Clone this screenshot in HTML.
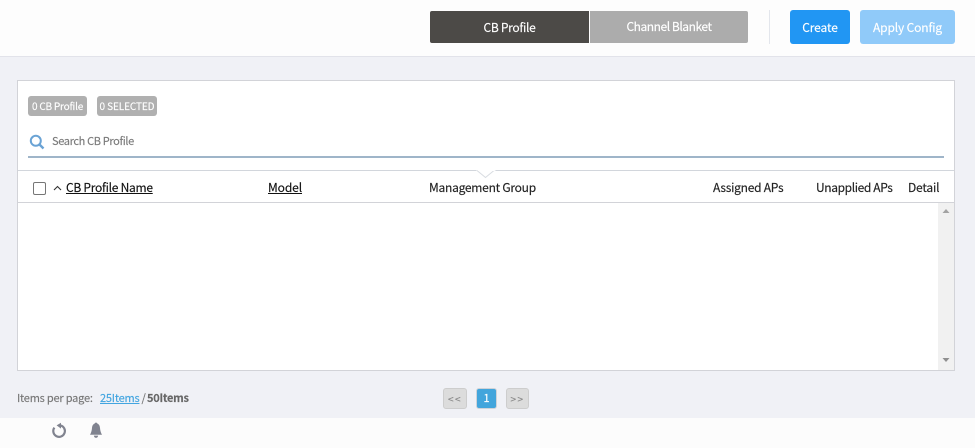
<!DOCTYPE html>
<html><head><meta charset="utf-8"><style>
html,body{margin:0;padding:0}
body{width:975px;height:448px;overflow:hidden;position:relative;background:#f0f1f6;font-family:"Noto Sans CJK JP","Liberation Sans",sans-serif;font-size:12px;color:#222}
div,a,span.a{position:absolute;box-sizing:border-box}
.t{white-space:nowrap;line-height:16px;-webkit-text-stroke:.15px currentColor}
</style></head><body>
<div style="left:0;top:0;width:975px;height:57px;background:#fdfdfd;border-bottom:1px solid #e2e3ea"></div>
<div class="t" style="left:430px;top:11px;width:159px;height:32px;background:#4c4a47;border-radius:2px 0 0 2px;color:#fff;text-align:center;line-height:33px;letter-spacing:-.3px">CB Profile</div>
<div class="t" style="left:590px;top:11px;width:158px;height:32px;background:#acacac;border-radius:0 2px 2px 0;color:#fff;text-align:center;line-height:31px;letter-spacing:-.45px">Channel Blanket</div>
<div style="left:769px;top:10px;width:1px;height:34px;background:#e3e6ec"></div>
<div class="t" style="left:790px;top:10px;width:60px;height:34px;background:#2196f3;border-radius:3px;color:#fff;text-align:center;line-height:35px;letter-spacing:-.1px">Create</div>
<div class="t" style="left:860px;top:10px;width:95px;height:34px;background:#90caf9;border-radius:3px;color:#fff;text-align:center;line-height:35px;letter-spacing:-.15px">Apply Config</div>

<div style="left:17px;top:80px;width:938px;height:291px;background:#fff;border:1px solid #d2d3d8"></div>
<div class="t" style="left:28px;top:96px;width:59px;height:20px;background:#b0b0b0;border-radius:3px;color:#fff;font-size:10px;text-align:center;line-height:20px;letter-spacing:-.2px">0 CB Profile</div>
<div class="t" style="left:97px;top:96px;width:60px;height:20px;background:#b0b0b0;border-radius:3px;color:#fff;font-size:10px;text-align:center;line-height:20px;letter-spacing:-.1px">0 SELECTED</div>
<svg style="position:absolute;left:29px;top:134px" width="16" height="16" viewBox="0 0 16 16"><circle cx="6.8" cy="6.8" r="5" fill="none" stroke="#6aa3d5" stroke-width="2"/><path d="M10.500 10.500L14.500 14.500" stroke="#6aa3d5" stroke-width="2.4" fill="none"/></svg>
<div class="t" style="left:52px;top:133px;font-size:11px;color:#7a7a7a;letter-spacing:-.35px">Search CB Profile</div>
<div style="left:28px;top:156px;width:916px;height:2px;background:#9fb5c9"></div>

<div style="left:18px;top:170px;width:936px;height:1px;background:#d2d6dc"></div>
<svg style="position:absolute;left:476px;top:170px" width="20" height="9" viewBox="0 0 20 9"><path d="M0 0L10 8L20 0" fill="#fff"/><path d="M1 0.500L9.500 7.500L18 0.500" fill="none" stroke="#d8dce1" stroke-width="1"/><path d="M2 0H18V1H2Z" fill="#fff"/></svg>
<div style="left:33px;top:182px;width:13px;height:13px;background:#fff;border:1px solid #767676;border-radius:2px"></div>
<svg style="position:absolute;left:53px;top:184px" width="9" height="8" viewBox="0 0 9 8"><path d="M1 6L4.500 2.500L8 6" fill="none" stroke="#333" stroke-width="1.1"/></svg>
<div class="t" style="left:66px;top:180px;text-decoration:underline;color:#111;letter-spacing:-.27px">CB Profile Name</div>
<div class="t" style="left:268px;top:180px;text-decoration:underline;color:#111;letter-spacing:-.1px">Model</div>
<div class="t" style="left:429px;top:180px;letter-spacing:-.25px">Management Group</div>
<div class="t" style="left:713px;top:180px;letter-spacing:-.25px">Assigned APs</div>
<div class="t" style="left:816px;top:180px;letter-spacing:-.38px">Unapplied APs</div>
<div class="t" style="left:908px;top:180px;letter-spacing:-.2px">Detail</div>
<div style="left:18px;top:202px;width:936px;height:1px;background:#d2d3d8"></div>
<div style="left:938px;top:203px;width:16px;height:167px;background:#f1f1f1"></div>
<svg style="position:absolute;left:941px;top:208px" width="10" height="6" viewBox="0 0 10 6"><path d="M1.500 5H8.500L5 1Z" fill="#a3a3a3"/></svg>
<svg style="position:absolute;left:941px;top:357px" width="10" height="6" viewBox="0 0 10 6"><path d="M1.500 1H8.500L5 5Z" fill="#8f8f8f"/></svg>

<div class="t" style="left:17px;top:390px;font-size:11px;color:#777;letter-spacing:-.2px">Items per page:</div>
<div class="t" style="left:100px;top:390px;font-size:11px;color:#42a5e0;text-decoration:underline;letter-spacing:-.2px">25Items</div>
<div class="t" style="left:141.500px;top:390px;font-size:11px;color:#777">/</div>
<div class="t" style="left:147px;top:390px;font-size:11px;color:#666;font-weight:700;letter-spacing:-.25px">50Items</div>

<div class="t" style="left:443px;top:388px;width:24px;height:21px;background:#dcdcdc;border:1px solid #cdcdcd;border-radius:3px;color:#888;font-size:10px;text-align:center;line-height:19px;letter-spacing:1.500px">&lt;&lt;</div>
<div class="t" style="left:476px;top:388px;width:21px;height:21px;background:#42a5dc;border:1px solid #cfd3d8;border-radius:3px;color:#fff;font-size:11px;text-align:center;line-height:19px">1</div>
<div class="t" style="left:506px;top:388px;width:23px;height:21px;background:#dcdcdc;border:1px solid #cdcdcd;border-radius:3px;color:#888;font-size:10px;text-align:center;line-height:19px;letter-spacing:1.500px">&gt;&gt;</div>

<div style="left:0;top:418px;width:975px;height:30px;background:#fcfcfc"></div>
<svg style="position:absolute;left:51px;top:422px" width="16" height="17" viewBox="0 0 16 17"><path d="M3.400 5.600A5.800 5.800 0 1 0 9.500 3.400" fill="none" stroke="#80838f" stroke-width="2.200"/><path d="M10 0.800V6.600L5.600 3.400Z" fill="#80838f"/></svg>
<svg style="position:absolute;left:89px;top:422px" width="14" height="17" viewBox="0 0 14 17"><path d="M5.800 1.500C5.800 .4 8.200 .4 8.200 1.500C10.200 2.200 10.800 4 11 6C11.200 9 12 10.800 13 12.800H1C2 10.800 2.800 9 3 6C3.200 4 3.800 2.200 5.800 1.500Z" fill="#80838f"/><path d="M4.800 13.600H9.200C8.900 15.200 7.900 15.800 7 15.800C6.100 15.800 5.100 15.200 4.800 13.600Z" fill="#80838f"/></svg>
</body></html>
